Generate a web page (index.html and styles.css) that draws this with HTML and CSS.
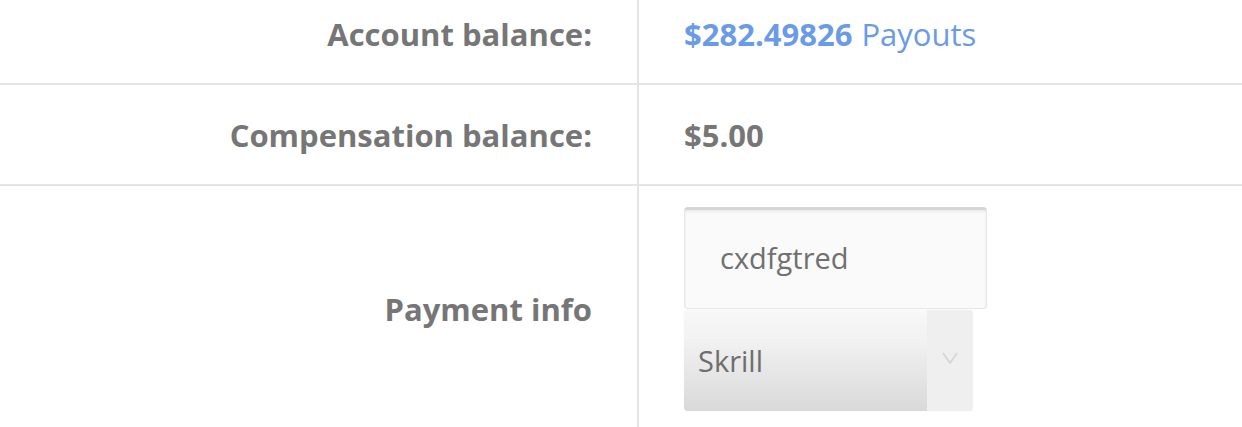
FILE: index.html
```html
<!DOCTYPE html>
<html>
<head>
<meta charset="utf-8">
<link rel="stylesheet" href="styles.css">
</head>
<body>
<div class="table">
  <div class="row">
    <div class="label">Account balance:</div>
    <div class="value"><span class="amount">$282.49826</span> <a class="link">Payouts</a></div>
  </div>
  <div class="row">
    <div class="label">Compensation balance:</div>
    <div class="value"><span class="strong">$5.00</span></div>
  </div>
  <div class="row last">
    <div class="label">Payment info</div>
    <div class="value stack">
      <div class="input">cxdfgtred</div>
      <div class="select">
        <span class="select-text">Skrill</span>
        <span class="select-arrow"><svg width="18" height="14" viewBox="0 0 18 14"><path d="M2 2 L9 12 L16 2" fill="none" stroke="#d4d4d4" stroke-width="1.6"/></svg></span>
      </div>
    </div>
  </div>
</div>
</body>
</html>
```
FILE: styles.css
```css
html, body {
  margin: 0;
  padding: 0;
  background: #ffffff;
  overflow: hidden;
}
body {
  font-family: "Open Sans", "Liberation Sans", sans-serif;
  color: #777777;
}
.table {
  margin-top: -16px;
}
.row {
  display: grid;
  grid-template-columns: 639px 1fr;
  border-bottom: 2px solid #e4e4e4;
  height: 99px;
}
.row.last {
  height: 246px;
  border-bottom: none;
}
.label {
  border-right: 2px solid #e4e4e4;
  display: flex;
  align-items: center;
  justify-content: flex-end;
  padding-right: 45px;
  font-weight: 700;
  font-size: 31px;
  color: #767676;
}
.value {
  display: flex;
  align-items: center;
  padding-left: 45px;
  font-size: 31px;
}
.amount {
  font-weight: 700;
  color: #6a9be6;
}
.link {
  color: #6a9be6;
  margin-left: 9px;
}
.strong {
  font-weight: 700;
  color: #767676;
}
.stack {
  flex-direction: column;
  align-items: flex-start;
  justify-content: flex-start;
  padding-top: 21px;
}
.input {
  box-sizing: border-box;
  width: 303px;
  height: 102px;
  border: 1px solid #e6e6e6;
  border-top: 3px solid #d6d6d6;
  border-radius: 4px;
  background: #fafafa;
  box-shadow: inset 0 2px 3px rgba(0,0,0,0.06);
  font-size: 29px;
  color: #707070;
  padding-left: 35px;
  padding-bottom: 4px;
  display: flex;
  align-items: center;
}
.select {
  box-sizing: border-box;
  width: 289px;
  height: 101px;
  margin-top: 1px;
  border-radius: 4px;
  display: flex;
  overflow: hidden;
  box-shadow: 0 0 1px rgba(0,0,0,0.15);
}
.select-text {
  flex: 1;
  display: flex;
  align-items: center;
  padding-left: 14px;
  font-size: 29px;
  color: #6e6e6e;
  background: linear-gradient(#f8f8f8 0%, #f3f3f3 25%, #d9d9d9 100%);
}
.select-arrow {
  width: 46px;
  background: #efefef;
  display: flex;
  align-items: center;
  justify-content: center;
  padding-bottom: 6px;
}
```
